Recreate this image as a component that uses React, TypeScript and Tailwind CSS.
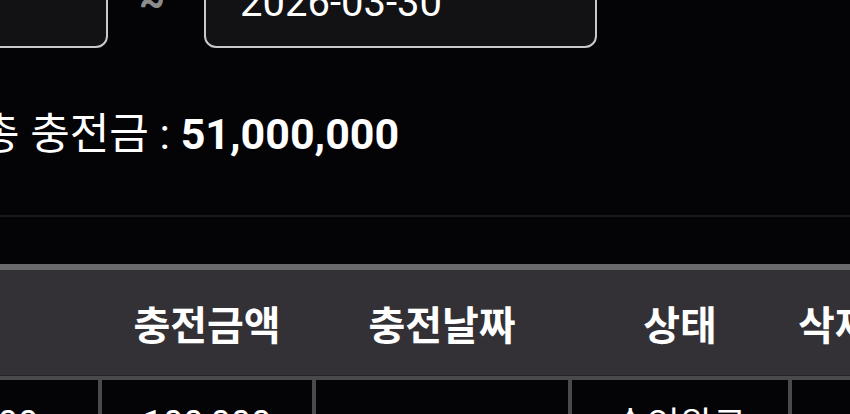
const FONT = "font-['Roboto','Noto_Sans_CJK_KR',sans-serif]"

const COLS = 'grid grid-cols-[400px_210px_252px_216px_120px] gap-x-[4px]'

const rows = [
  { date: '2026-03-30 14:00', amount: '100,000', charged: '2026-03-30', status: '승인완료' },
]

export default function App() {
  return (
    <div className={`${FONT} w-full h-screen overflow-hidden bg-[#040306] text-white`}>
      {/* date range */}
      <div className="flex items-center -mt-[32px] -ml-[200px]">
        <div className="w-[308px] h-[80px] shrink-0 rounded-[12px] border-2 border-[#c9c9cb] bg-[#121214]" />
        <div className="w-[96px] shrink-0 flex justify-center text-[40px] leading-none font-bold text-[#8c8c8c] -mt-[10px] pr-[8px]">
          ~
        </div>
        <div className="w-[393px] h-[80px] shrink-0 rounded-[12px] border-2 border-[#c9c9cb] bg-[#121214] flex items-center pl-[34px]">
          <span className="text-[40px] leading-none -mt-[11px]">2026-03-30</span>
        </div>
      </div>

      {/* total */}
      <div className="mt-[61px] -ml-[20px] text-[43px] leading-[50px] whitespace-nowrap">
        총 충전금 : <span className="font-bold">51,000,000</span>
      </div>

      <div className="mt-[56px] h-[2px] bg-[#1a191e]" />

      {/* table */}
      <div className="mt-[47px] -ml-[302px] w-[1220px] border-t-[6px] border-[#6a696c]">
        <div className={`${COLS} h-[106px] items-center bg-[#333136] border-b border-[#242326] text-[40px] font-bold`}>
          <div className="text-center">충전일시</div>
          <div className="text-center pt-[8px]">충전금액</div>
          <div className="text-center pt-[8px]">충전날짜</div>
          <div className="text-center pt-[8px]">상태</div>
          <div className="pt-[8px] pl-[6px]">삭제</div>
        </div>
        <div className="bg-[#4a494c] pt-[4px]">
          {rows.map((r) => (
            <div key={r.date} className={`${COLS} text-[36px] leading-[48px]`}>
              <div className="bg-[#040306] text-center pt-[20px] pb-[18px]">{r.date}</div>
              <div className="bg-[#040306] text-center pt-[20px] pb-[18px]">{r.amount}</div>
              <div className="bg-[#040306] text-center pt-[60px] pb-[18px]">{r.charged}</div>
              <div className="bg-[#040306] text-center pt-[22px] pb-[18px]">{r.status}</div>
              <div className="bg-[#040306]" />
            </div>
          ))}
        </div>
      </div>
    </div>
  )
}
